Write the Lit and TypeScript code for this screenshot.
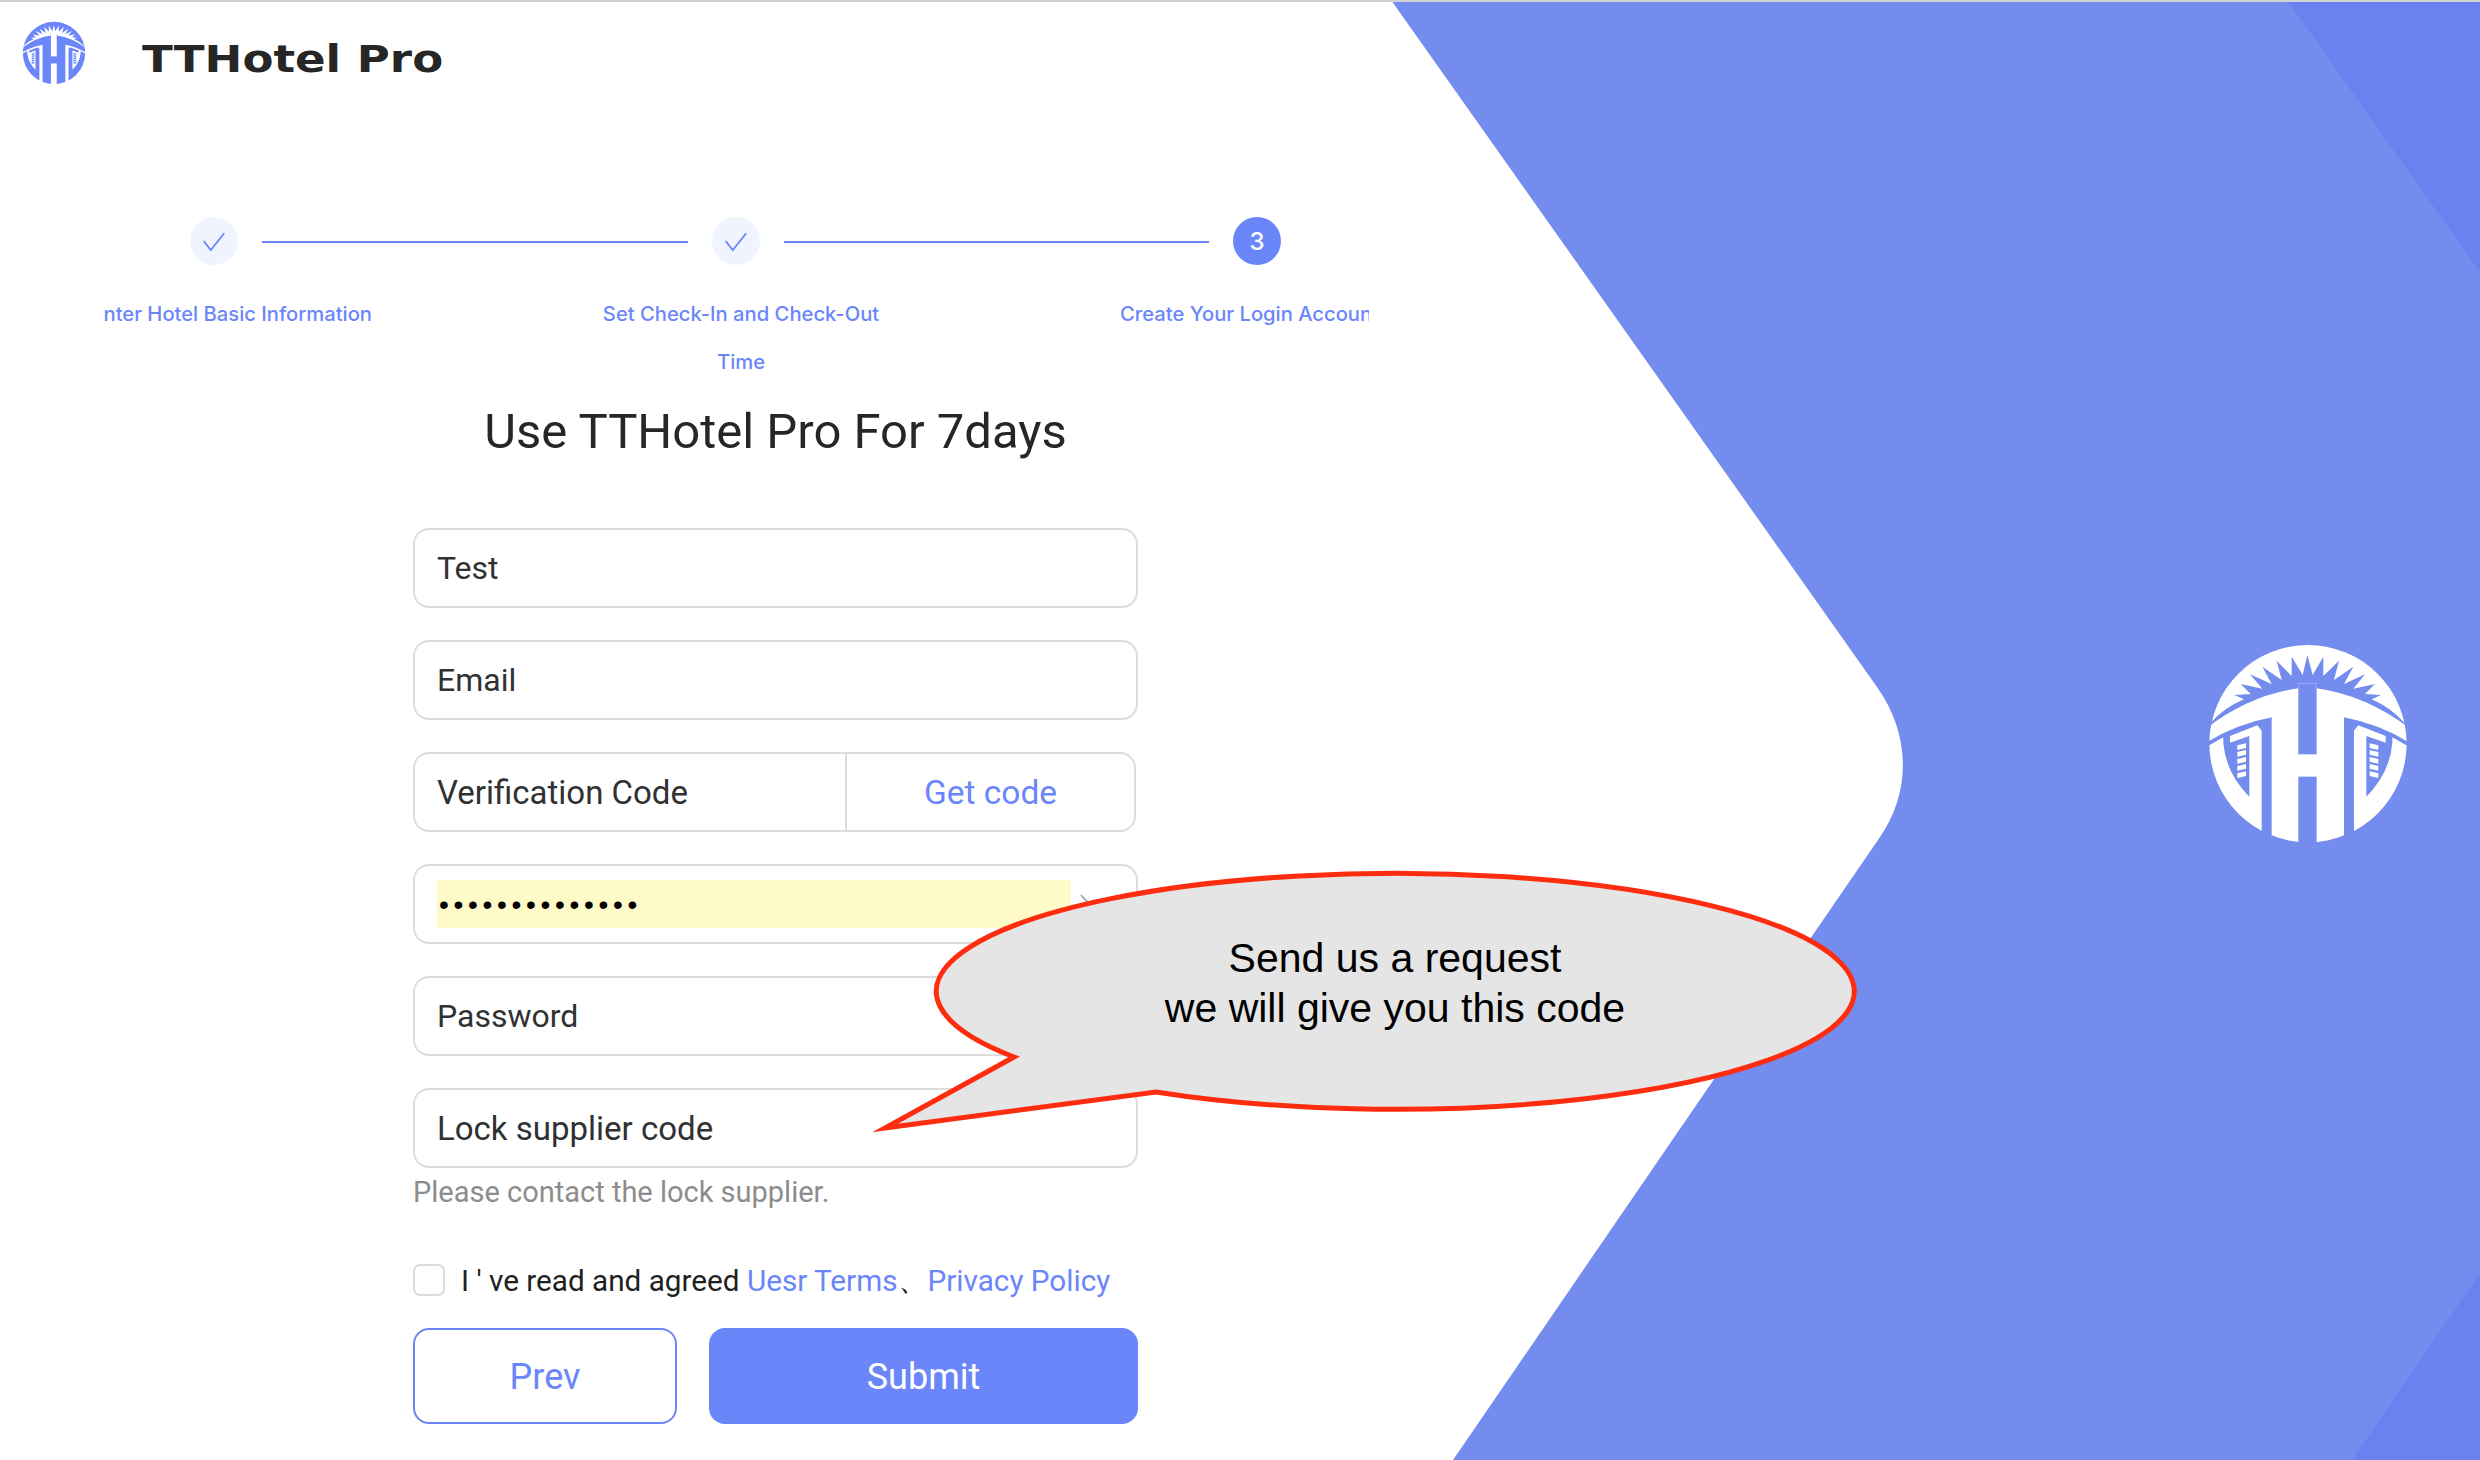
import { LitElement, html, css, svg } from "lit";
import { customElement } from "lit/decorators.js";

const side = (fg: string, bg: string) => svg`
  <path fill=${bg} d="M78 368 Q170 312 275 292 L275 670 L245 670 L245 332 L232 316 L150 348 L150 368 L208 348 L208 530 Q138 460 130 370 L130 352 L88 376 Z" />
  <path fill=${fg} d="M172 376 L198 370 L198 384 L172 390 Z M172 396 L198 390 L198 404 L172 410 Z M172 417 L198 411 L198 425 L172 431 Z M172 438 L198 432 L198 446 L172 452 Z M172 460 L198 454 L198 468 L172 474 Z" />`;

const logo = (fg: string, bg: string) => svg`
  <circle cx="384" cy="371" r="296" fill=${fg} />
  <path fill=${bg} d="M80 324 Q210 225 355 205 L355 190 L410 190 L410 205 Q555 225 688 324 L670 305 Q630 262 575 238 L603 225 L555 222 L585 192 L520 206 L555 163 L492 192 L520 140 L462 180 L477 122 L430 168 L430 110 L398 165 L382 105 L368 165 L335 110 L335 168 L290 122 L305 180 L247 140 L275 192 L210 163 L247 206 L182 192 L212 222 L163 225 L192 238 Q135 262 95 305 Z" />
  <rect x="355" y="190" width="55" height="213" fill=${bg} />
  <rect x="355" y="470" width="55" height="205" fill=${bg} />
  ${side(fg, bg)}
  <g transform="translate(767 0) scale(-1 1)">${side(fg, bg)}</g>`;

const check = html`<svg viewBox="0 0 48 48"><path d="M13.6 24 L20.8 33 L34.2 16.3" fill="none" stroke="#6b86f9" stroke-width="1.8" /></svg>`;

@customElement("app-root")
export class AppRoot extends LitElement {
  static styles = css`
    :host { display: block; font-family: "Roboto", "Liberation Sans", sans-serif; color: #303133; }
    * { box-sizing: border-box; }
    .page { position: relative; width: 2480px; height: 1460px; overflow: hidden; background: #fff; border-top: 2px solid #d2d2d2; }
    .bg { position: absolute; left: 0; top: -2px; width: 2480px; height: 1460px; }
    .content { position: relative; width: 1392px; }
    .header { display: flex; align-items: center; height: 102px; padding-left: 22px; }
    .mark { width: 64px; height: 64px; flex: none; }
    .word { margin-left: 56px; margin-top: 12px; font: bold 37px/1 "DejaVu Sans", sans-serif; color: #262626; white-space: nowrap; transform: scaleX(1.22); transform-origin: left center; }
    .steps { display: flex; align-items: center; margin: 113px 0 0 190px; width: 1091px; }
    .dot { width: 48px; height: 48px; flex: none; border-radius: 50%; background: #f0f4fe; display: flex; align-items: center; justify-content: center; color: #fff; font: 500 24px "Inter", sans-serif; }
    .dot.on { background: #6b86f9; }
    .dot svg { width: 48px; height: 48px; }
    .line { flex: 1; height: 2px; margin: 2px 24px 0; background: #6b86f9; }
    .labels { display: grid; grid-template-columns: 268px 218px 302px 228px 249px; margin: 25px 0 0 104px; font: 500 20.2px/48px "Inter", sans-serif; color: #6b86f9; }
    .lab { overflow: hidden; height: 96px; }
    .lab1 { white-space: nowrap; display: flex; justify-content: flex-end; }
    .lab2 { grid-column: 3; text-align: center; padding: 0 8px; }
    .lab3 { grid-column: 5; white-space: nowrap; }
    .form { width: 725px; margin-left: 413px; }
    h1 { margin: 0 0 50px; font: 400 49px/92px "Roboto", sans-serif; text-align: center; color: #262626; height: 92px; white-space: nowrap; }
    .field { height: 80px; margin-bottom: 32px; border: 2px solid #dcdcdc; border-radius: 16px; padding-left: 22px; display: flex; align-items: center; font-size: 32px; color: #303133; background: #fff; }
    .wide { font-size: 33px; }
    .code { display: flex; width: 723px; height: 80px; margin-bottom: 32px; }
    .code .l { width: 434px; border: 2px solid #dcdcdc; border-radius: 16px 0 0 16px; padding-left: 22px; display: flex; align-items: center; font-size: 33px; }
    .code .r { flex: 1; margin-left: -1px; border: 2px solid #dcdcdc; border-left-width: 1px; border-radius: 0 16px 16px 0; display: flex; align-items: center; justify-content: center; font-size: 33.5px; color: #6b86f9; }
    .auto { width: 634px; height: 48px; background: #fefbc8; display: flex; align-items: center; padding: 2px 0 0 2px; font: 28px "Liberation Sans", sans-serif; letter-spacing: 4.7px; color: #000; }
    .eye { width: 40px; height: 24px; margin-left: 8px; }
    .last { margin-bottom: 4px; }
    .hint { font-size: 29px; line-height: 40px; color: #8c8c8c; }
    .agree { display: flex; align-items: center; height: 32px; margin-top: 52px; font-size: 29.7px; color: #1f1f1f; white-space: pre; }
    .box { width: 32px; height: 32px; border: 2px solid #dcdcdc; border-radius: 7px; margin-right: 16px; flex: none; }
    .agree a { color: #6b86f9; }
    .btns { display: flex; gap: 32px; margin-top: 32px; }
    .btn { height: 96px; border-radius: 16px; display: flex; align-items: center; justify-content: center; font-size: 36px; padding-top: 2px; }
    .prev { width: 264px; border: 2px solid #6b86f9; color: #6b86f9; background: #fff; }
    .sub { flex: 1; background: #6b86f9; color: #fff; }
    .bubble { position: absolute; left: 0; top: -2px; width: 2480px; height: 1460px; pointer-events: none; }
    .btext { position: absolute; left: 936px; top: 931px; width: 918px; text-align: center; font: 41px/50px "Liberation Sans", Arial, sans-serif; color: #000; }
  `;

  render() {
    return html`
      <div class="page">
        <svg class="bg" viewBox="0 0 2480 1460">
          <path fill="#748cee" d="M1391 0 L1877 687 C1911 735 1911 792 1880 837 L1453 1460 L2480 1460 L2480 0 Z" />
          <path fill="#6a82ef" d="M2287 0 L2480 272 L2480 0 Z" />
          <path fill="#6a82ef" d="M2480 1273 L2352 1460 L2480 1460 Z" />
          <g transform="translate(2180 620) scale(0.3333)">${logo("#fff", "#748cee")}</g>
        </svg>
        <div class="content">
          <div class="header">
            <svg class="mark" viewBox="80 67 608 608">${logo("#6b86f9", "#fff")}</svg>
            <div class="word">TTHotel Pro</div>
          </div>
          <div class="steps">
            <div class="dot">${check}</div>
            <div class="line"></div>
            <div class="dot">${check}</div>
            <div class="line"></div>
            <div class="dot on">3</div>
          </div>
          <div class="labels">
            <div class="lab lab1"><span>Enter Hotel Basic Information</span></div>
            <div class="lab lab2">Set Check-In and Check-Out Time</div>
            <div class="lab lab3">Create Your Login Account</div>
          </div>
          <div class="form">
            <h1>Use TTHotel Pro For 7days</h1>
            <div class="field">Test</div>
            <div class="field">Email</div>
            <div class="code"><div class="l">Verification Code</div><div class="r">Get code</div></div>
            <div class="field">
              <div class="auto">••••••••••••••</div>
              <svg class="eye" viewBox="0 0 40 24"><path d="M2 3 Q20 26 38 3" fill="none" stroke="#a8abb2" stroke-width="2" /></svg>
            </div>
            <div class="field">Password</div>
            <div class="field last wide">Lock supplier code</div>
            <div class="hint">Please contact the lock supplier.</div>
            <div class="agree"><span class="box"></span>I ' ve read and agreed <a>Uesr Terms</a>、<a>Privacy Policy</a></div>
            <div class="btns">
              <div class="btn prev">Prev</div>
              <div class="btn sub">Submit</div>
            </div>
          </div>
        </div>
        <svg class="bubble" viewBox="0 0 2480 1460">
          <path d="M1014 1057 A459 118 0 1 1 1156 1092 L885 1128 Z" fill="#e5e5e5" stroke="#ff2d10" stroke-width="5" stroke-miterlimit="12" />
        </svg>
        <div class="btext">Send us a request<br />we will give you this code</div>
      </div>
    `;
  }
}
